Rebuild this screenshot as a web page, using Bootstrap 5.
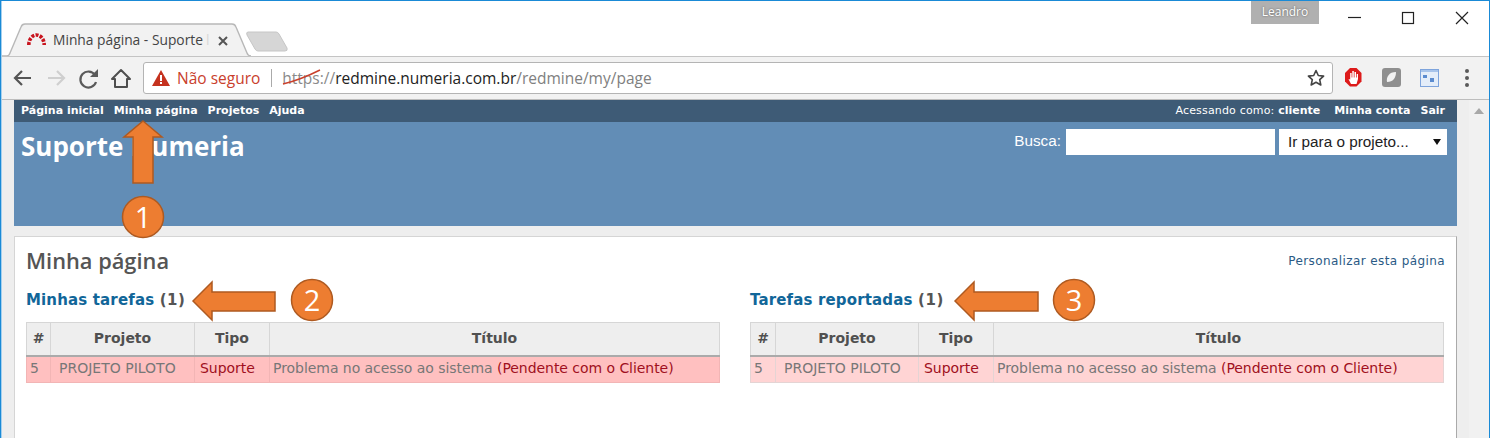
<!DOCTYPE html>
<html lang="pt-BR">
<head>
<meta charset="utf-8">
<title>Minha página - Suporte Numeria</title>
<link href="https://cdn.jsdelivr.net/npm/bootstrap@5.3.0/dist/css/bootstrap.min.css" rel="stylesheet">
<style>
html,body{height:100%;overflow:hidden;}
body{background:#fff;font-family:"DejaVu Sans",sans-serif;position:relative;}
.win{height:438px;width:1490px;border:solid #1a8ad6;border-width:1px 1px 0 1px;padding-left:1px;background:#a5d0ee;display:flex;flex-direction:column;overflow:hidden;}
.tabstrip{height:55px;flex:none;background:#fff;position:relative;}
.tabshape{position:absolute;left:0;top:0;}
.tabtitle{position:absolute;left:51px;top:30px;white-space:nowrap;font:13.8px "Open Sans",sans-serif;color:#444;line-height:18px;}
.tabfade{color:#d8d8d8;margin-left:3px;}
.userbadge{position:absolute;left:1249px;top:0;width:68px;height:23px;background:#b0b0b0;color:#fff;font:12px "Open Sans",sans-serif;line-height:22px;text-align:center;text-shadow:0 0 2px #555;}
.toolbar{height:44px;flex:none;background:#f2f2f2;border-bottom:1px solid #bdbdbd;border-top:1px solid #c4c4c4;display:flex;align-items:center;position:relative;}
.toolicons{width:141px;flex:none;}
.addr{width:1190px;height:32px;flex:none;background:#fff;border:1px solid #b4b4b4;border-radius:3px;display:flex;align-items:center;font:15.5px "Open Sans",sans-serif;white-space:nowrap;padding-left:8px;}
.warnlabel{color:#c9402c;margin-left:7px;}
.addrsep{width:1px;height:18px;background:#aaa;margin:0 10px 0 11px;}
.urlscheme{color:#8a8a8a;}
.urlhost{color:#222;}
.urlpath{color:#808080;}
.staricon{margin-left:auto;margin-right:7px;}
.pagearea{flex:1;display:flex;background:#eee;min-height:0;}
.pagemain{width:1443px;margin-left:12px;flex:none;display:flex;flex-direction:column;}
.scrolltrack{width:12px;flex:none;}
.scrollbarx{flex:1;background:#f1f1f1;padding-top:8px;}
.scrollarrow{display:block;margin:0 auto;}
.topmenu{height:22px;background:#3e5b76;color:#fff;display:flex;justify-content:space-between;align-items:center;font-size:11px;font-weight:700;padding:0 12px 0 7px;flex:none;}
.topmenu span{margin-right:10px;}
.topmenu .lastitem{margin-right:0;}
.topmenu .normalw{font-weight:400;margin-right:0;letter-spacing:.17px;}
.hdr{height:104px;background:#628db6;flex:none;color:#fff;padding:7px 10px 0 7px;display:flex;justify-content:space-between;}
.sitename{font-size:26px;font-weight:700;line-height:34px;font-family:"Open Sans",sans-serif;}
.quick{display:flex;align-items:flex-start;font:15.300px "Liberation Sans",sans-serif;}
.quicklabel{line-height:24px;margin-right:5px;}
.quickinput{width:209px;height:26px;background:#fff;margin-right:4px;}
.quicksel{width:168px;height:26px;background:#fff;color:#222;line-height:26px;padding:0 6px 0 9px;display:flex;justify-content:space-between;}
.contentbox{margin-top:10px;flex:1;background:#fff;border:1px solid #d5d5d5;border-right-color:#aaa;border-bottom:0;padding:10px 12px 0 11px;}
.contentcustom{font-size:12px;color:#2a5a85;letter-spacing:.4px;line-height:28px;margin-right:-1px;}
.pagetitle{font:600 21.800px "Open Sans",sans-serif;color:#555;line-height:28px;margin:0;}
.colsgap{gap:30px;margin-top:13px;}
.splitcol{flex:1 1 0;min-width:0;}
.splitfirst{flex:0 0 694px;}
.sectitle{font-size:15px;font-weight:700;line-height:24px;color:#555;margin:0 0 10px;letter-spacing:.15px;}
.sectitle a{color:#169;text-decoration:none;}
.sectitle a + span{letter-spacing:.6px;}
table.isstable{width:100%;table-layout:fixed;border-collapse:collapse;margin:0;font-size:14px;}
.isstable th{background:#eee;color:#505050;border:1px solid #d6d6d6;border-bottom:2px solid #aaa;height:33px;text-align:center;font-size:14px;font-weight:700;padding:0;}
.isstable td{height:27px;padding:0 3px 1px;border:1px solid #f2b5b5;color:#777;white-space:nowrap;letter-spacing:-.05px;}
.rowstrong td{background:#ffc0c0;}
.rowsoft td{background:#ffd4d4;border-color:#e4d4d4;}
.isstable .cp{padding-left:8px;letter-spacing:0;}
.isstable .redt{color:#a01020;}
.isstable td.redt{padding-left:5px;}
.overlay{position:absolute;left:0;top:0;pointer-events:none;}
.overlay text{font-family:"Open Sans",sans-serif;font-size:29px;fill:#fff;text-anchor:middle;}
</style>
</head>
<body>
<div class="win">
  <div class="tabstrip">
    <svg class="tabshape" width="300" height="56" viewBox="0 0 300 56">
      <path d="M0 55H5Q7 55 8 52L19 26Q20 23 23 23H230Q233 23 234 26L245 52Q246 55 249 55" fill="#f2f2f2" stroke="#b8b8b8" stroke-width="1.400"/>
      <path d="M246 31H274Q276 31 277 33L285 47Q286 50 283 50H256Q254 50 253 48L245 34Q244 31 246 31Z" fill="#d6d6d6" stroke="#c6c6c6"/>
      <path d="M26.800 44A7.700 10 0 0 1 42.200 44" fill="none" stroke="#c8141e" stroke-width="3.600" stroke-dasharray="3 1.300"/>
      <path d="M217 36l8 8M225 36l-8 8" stroke="#555" stroke-width="2"/>
    </svg>
    <div class="tabtitle">Minha página - Suporte<span class="tabfade">l</span></div>
    <div class="userbadge">Leandro</div>
    <svg class="tabshape" width="1488" height="40" viewBox="0 0 1488 40" aria-hidden="true">
      <path d="M1346 16.500H1359" stroke="#222" stroke-width="1.200" fill="none"/>
      <rect x="1400.500" y="11.500" width="11" height="11" stroke="#222" stroke-width="1.200" fill="none"/>
      <path d="M1454 11L1466 23M1466 11L1454 23" stroke="#222" stroke-width="1.200" fill="none"/>
    </svg>
  </div>
  <div class="toolbar">
    <svg class="toolicons" height="30" viewBox="0 0 141 30">
      <path d="M29 15H13M20 8l-7 7 7 7" fill="none" stroke="#555" stroke-width="2.200"/>
      <path d="M46 15H62M55 8l7 7-7 7" fill="none" stroke="#cfcfcf" stroke-width="2.200"/>
      <path d="M93 12A8 8 0 1 0 94 19" fill="none" stroke="#5a5a5a" stroke-width="2.200"/>
      <path d="M96 6V14H88Z" fill="#5a5a5a"/>
      <path d="M110 16L119 7L128 16H125V24H113V16Z" fill="none" stroke="#4f4f4f" stroke-width="2" stroke-linejoin="round"/>
    </svg>
    <div class="addr">
      <svg width="18" height="16" viewBox="0 0 18 16"><path d="M9 0L18 16H0Z" fill="#c5321f"/><path d="M8 5h2v6H8zM8 12h2v2H8z" fill="#fff"/></svg>
      <span class="warnlabel">Não seguro</span>
      <span class="addrsep"></span>
      <span class="urlscheme">https://</span><span class="urlhost">redmine.numeria.com.br</span><span class="urlpath">/redmine/my/page</span>
      <svg class="staricon" width="18" height="18" viewBox="0 0 18 18"><path d="M9 1.500l2.300 5 5.300.6-3.900 3.600 1.100 5.300L9 13.300 4.200 16l1.100-5.300L1.400 7.100l5.300-.6z" fill="none" stroke="#444" stroke-width="1.600" stroke-linejoin="round"/></svg>
    </div>
    <svg width="155" height="30" viewBox="0 0 155 30">
      <path d="M17 5h6.500l5 5v8.500l-5 5H17l-5-5V10z" fill="#dd1b1b"/>
      <path d="M15.500 16l2.500 5h5.500l1.500-5v-5h-1.300v3.500h-.7V9h-1.500v5.500h-.7V8h-1.500v6.500h-.7V10h-1.400v6.500z" fill="#fff"/>
      <rect x="49" y="5" width="19" height="19" rx="3" fill="#8f8f8f"/><path d="M54 19c-1-5 2-10 9-10 0 6-3 10-9 10z" fill="#f2f2f2"/>
      <rect x="87.500" y="6.500" width="18" height="17" fill="#e4edf9" stroke="#7ea4dc"/><path d="M88 7h17v2H88z" fill="#a7c3ea"/><path d="M90 12h4v3h-4zM97 15h4v4h-4z" fill="#5b8bcf"/>
      <circle cx="134" cy="8" r="2" fill="#5a5a5a"/><circle cx="134" cy="15" r="2" fill="#5a5a5a"/><circle cx="134" cy="22" r="2" fill="#5a5a5a"/>
    </svg>
  </div>
  <div class="pagearea">
    <div class="pagemain">
      <div class="topmenu">
        <div><span>Página inicial</span><span>Minha página</span><span>Projetos</span><span class="lastitem">Ajuda</span></div>
        <div><span class="normalw">Acessando como: </span><span>cliente</span><span class="ms-1">Minha conta</span><span class="lastitem">Sair</span></div>
      </div>
      <div class="hdr">
        <div class="sitename">Suporte Numeria</div>
        <div class="quick">
          <span class="quicklabel">Busca:</span>
          <div class="quickinput"></div>
          <div class="quicksel"><span>Ir para o projeto...</span><svg width="8" height="26" viewBox="0 0 8 26"><path d="M0 10h8l-4 6z" fill="#111"/></svg></div>
        </div>
      </div>
      <div class="contentbox">
        <div class="d-flex justify-content-between">
          <h2 class="pagetitle">Minha página</h2>
          <div class="contentcustom">Personalizar esta página</div>
        </div>
        <div class="d-flex colsgap">
          <div class="splitcol splitfirst">
            <h3 class="sectitle"><a href="#">Minhas tarefas</a> <span>(1)</span></h3>
            <table class="isstable rowstrong">
              <colgroup><col style="width:24px"><col style="width:144px"><col style="width:75px"><col></colgroup>
              <thead><tr><th>#</th><th>Projeto</th><th>Tipo</th><th>Título</th></tr></thead>
              <tbody><tr><td>5</td><td class="cp">PROJETO PILOTO</td><td class="redt">Suporte</td><td>Problema no acesso ao sistema <span class="redt">(Pendente com o Cliente)</span></td></tr></tbody>
            </table>
          </div>
          <div class="splitcol">
            <h3 class="sectitle"><a href="#">Tarefas reportadas</a> <span>(1)</span></h3>
            <table class="isstable rowsoft">
              <colgroup><col style="width:25px"><col style="width:143px"><col style="width:75px"><col></colgroup>
              <thead><tr><th>#</th><th>Projeto</th><th>Tipo</th><th>Título</th></tr></thead>
              <tbody><tr><td>5</td><td class="cp">PROJETO PILOTO</td><td class="redt">Suporte</td><td>Problema no acesso ao sistema <span class="redt">(Pendente com o Cliente)</span></td></tr></tbody>
            </table>
          </div>
        </div>
      </div>
    </div>
    <div class="scrolltrack"></div>
    <div class="scrollbarx"><svg class="scrollarrow" width="10" height="6" viewBox="0 0 10 6"><path d="M5 0l5 6H0z" fill="#a8a8a8"/></svg></div>
  </div>
</div>
<svg class="overlay" width="1490" height="438" viewBox="0 0 1490 438">
  <path d="M283 84C296 81 308 76 320 70" fill="none" stroke="#c9402c" stroke-width="1.500"/>
  <g fill="#ed7d31" stroke="#ae5a21" stroke-width="1.500">
    <path d="M143 121L162 137H153V183H133V137H124Z"/>
    <circle cx="143" cy="217" r="20.500"/>
    <path d="M193 301L212 282V292H275V311H212V320Z"/>
    <circle cx="312" cy="300" r="20.500"/>
    <path d="M955 301L974 282V292H1038V311H974V320Z"/>
    <circle cx="1074" cy="300" r="20.500"/>
  </g>
  <text x="143" y="228">1</text>
  <text x="312" y="311">2</text>
  <text x="1074" y="311">3</text>
</svg>
<script src="https://cdn.jsdelivr.net/npm/bootstrap@5.3.0/dist/js/bootstrap.bundle.min.js"></script>
</body>
</html>
